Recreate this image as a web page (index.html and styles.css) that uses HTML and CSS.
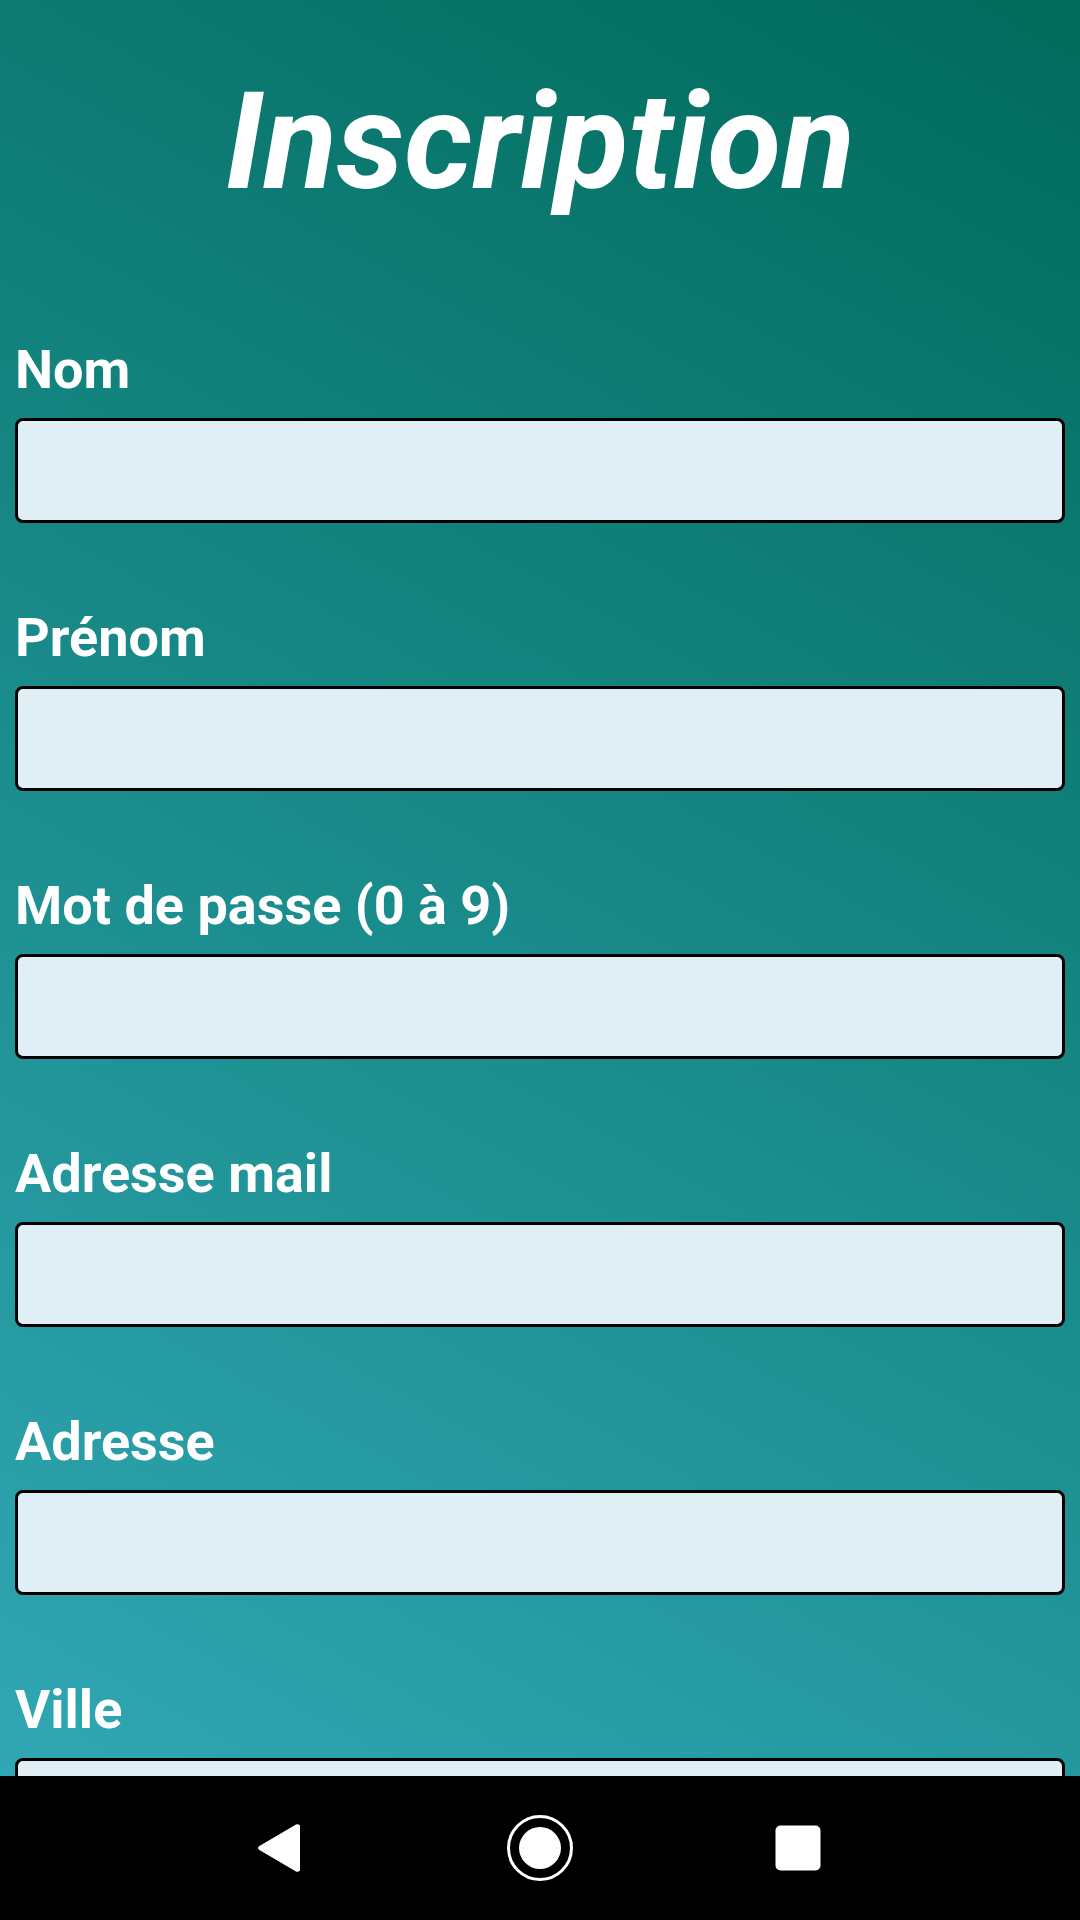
FILE: index.html
```html
<!DOCTYPE html>
<html lang="fr">
<head>
  <meta charset="utf-8">
  <meta name="viewport" content="width=device-width, initial-scale=1">
  <title>Inscription</title>
  <link rel="stylesheet" href="styles.css">
</head>
<body>
  <main class="screen">
    <h1 class="title">Inscription</h1>
    <form class="form">
      <div class="field">
        <label class="label" for="nom">Nom</label>
        <input class="input" id="nom" type="text">
      </div>
      <div class="field">
        <label class="label" for="prenom">Prénom</label>
        <input class="input" id="prenom" type="text">
      </div>
      <div class="field">
        <label class="label" for="passe">Mot de passe (0 à 9)</label>
        <input class="input" id="passe" type="password" inputmode="numeric">
      </div>
      <div class="field">
        <label class="label" for="mail">Adresse mail</label>
        <input class="input" id="mail" type="email">
      </div>
      <div class="field">
        <label class="label" for="adresse">Adresse</label>
        <input class="input" id="adresse" type="text">
      </div>
      <div class="field">
        <label class="label" for="ville">Ville</label>
        <input class="input" id="ville" type="text">
      </div>
    </form>
  </main>
  <nav class="navbar">
    <button class="nav-button" type="button" aria-label="Retour">
      <svg class="nav-icon" viewBox="0 0 72 72"><path d="M13 34.300 50 12.600Q52 11.500 54 13.500V58.500Q52 60.500 50 59.400L13 37.700Q11 36 13 34.300Z"/></svg>
    </button>
    <button class="nav-button" type="button" aria-label="Accueil">
      <svg class="nav-icon" viewBox="0 0 72 72"><circle cx="36" cy="36" r="31.500" fill="none" stroke="#fff" stroke-width="3"/><circle cx="36" cy="36" r="21"/></svg>
    </button>
    <button class="nav-button" type="button" aria-label="Applications récentes">
      <svg class="nav-icon" viewBox="0 0 72 72"><rect x="13.500" y="13.500" width="45" height="45" rx="5"/></svg>
    </button>
  </nav>
</body>
</html>
```
FILE: styles.css
```css
* {
  box-sizing: border-box;
}

body {
  display: flex;
  flex-direction: column;
  height: 100vh;
  margin: 0;
  font-family: Roboto, sans-serif;
  color: #fff;
  background: #000;
}

.screen {
  flex: 1;
  min-height: 0;
  padding: 62px 15px;
  overflow-y: auto;
  scrollbar-width: none;
  background: linear-gradient(209deg, #006b5b, #30a7b4);
}

.title {
  margin: 0 0 116px;
  font-size: 135px;
  font-style: italic;
  font-weight: 700;
  line-height: 160px;
  text-align: center;
}

.form {
  display: flex;
  flex-direction: column;
  gap: 83px;
}

.field {
  display: flex;
  flex-direction: column;
  gap: 16px;
}

.label {
  font-size: 54px;
  font-weight: 700;
  line-height: 64px;
}

.input {
  width: 100%;
  height: 105px;
  padding: 0 24px;
  border: 3px solid #000;
  border-radius: 8px;
  background: #e0eff6;
  font: inherit;
  font-size: 54px;
  color: #000;
}

.navbar {
  display: flex;
  justify-content: center;
  align-items: center;
  gap: 186px;
  height: 144px;
  background: #000;
}

.nav-button {
  display: block;
  padding: 0;
  border: 0;
  background: none;
}

.nav-icon {
  display: block;
  width: 72px;
  height: 72px;
  fill: #fff;
}
```
